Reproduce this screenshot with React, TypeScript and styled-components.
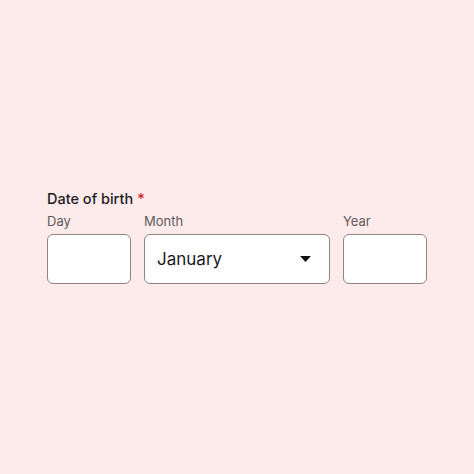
import styled, { createGlobalStyle } from "styled-components";

const GlobalStyle = createGlobalStyle`
  html, body {
    margin: 0;
    padding: 0;
    background: #fdebec;
  }
  body {
    font-family: Inter, "Noto Sans", sans-serif;
  }
`;

const Page = styled.main`
  width: 474px;
  height: 474px;
  box-sizing: border-box;
  padding: 189px 47px 0 47px;
`;

const Legend = styled.div`
  font-size: 14.5px;
  font-weight: 500;
  color: #1c1b1f;
  line-height: 20px;
  margin-bottom: 4px;
`;

const Required = styled.span`
  color: #d11a2a;
  margin-left: 4px;
`;

const Row = styled.div`
  display: flex;
  gap: 13px;
  align-items: flex-end;
`;

const Field = styled.div<{ $width: number }>`
  display: flex;
  flex-direction: column;
  gap: 5px;
  width: ${(p) => p.$width}px;
`;

const Label = styled.label`
  font-size: 13px;
  color: #5f5a5c;
  line-height: 16px;
`;

const Box = styled.div`
  box-sizing: border-box;
  height: 50px;
  border: 1px solid #8c8486;
  border-radius: 6px;
  background: #fff;
  display: flex;
  align-items: center;
  justify-content: space-between;
  padding: 0 18px 0 12px;
`;

const Value = styled.span`
  font-size: 17px;
  color: #1c1b1f;
`;

const Caret = () => (
  <svg width="11" height="6" viewBox="0 0 11 6">
    <path d="M0 0 H11 L5.5 6 Z" fill="#111" />
  </svg>
);

export default function App() {
  return (
    <>
      <GlobalStyle />
      <Page>
        <Legend>
          Date of birth<Required>*</Required>
        </Legend>
        <Row>
          <Field $width={84}>
            <Label>Day</Label>
            <Box />
          </Field>
          <Field $width={186}>
            <Label>Month</Label>
            <Box>
              <Value>January</Value>
              <Caret />
            </Box>
          </Field>
          <Field $width={84}>
            <Label>Year</Label>
            <Box />
          </Field>
        </Row>
      </Page>
    </>
  );
}
